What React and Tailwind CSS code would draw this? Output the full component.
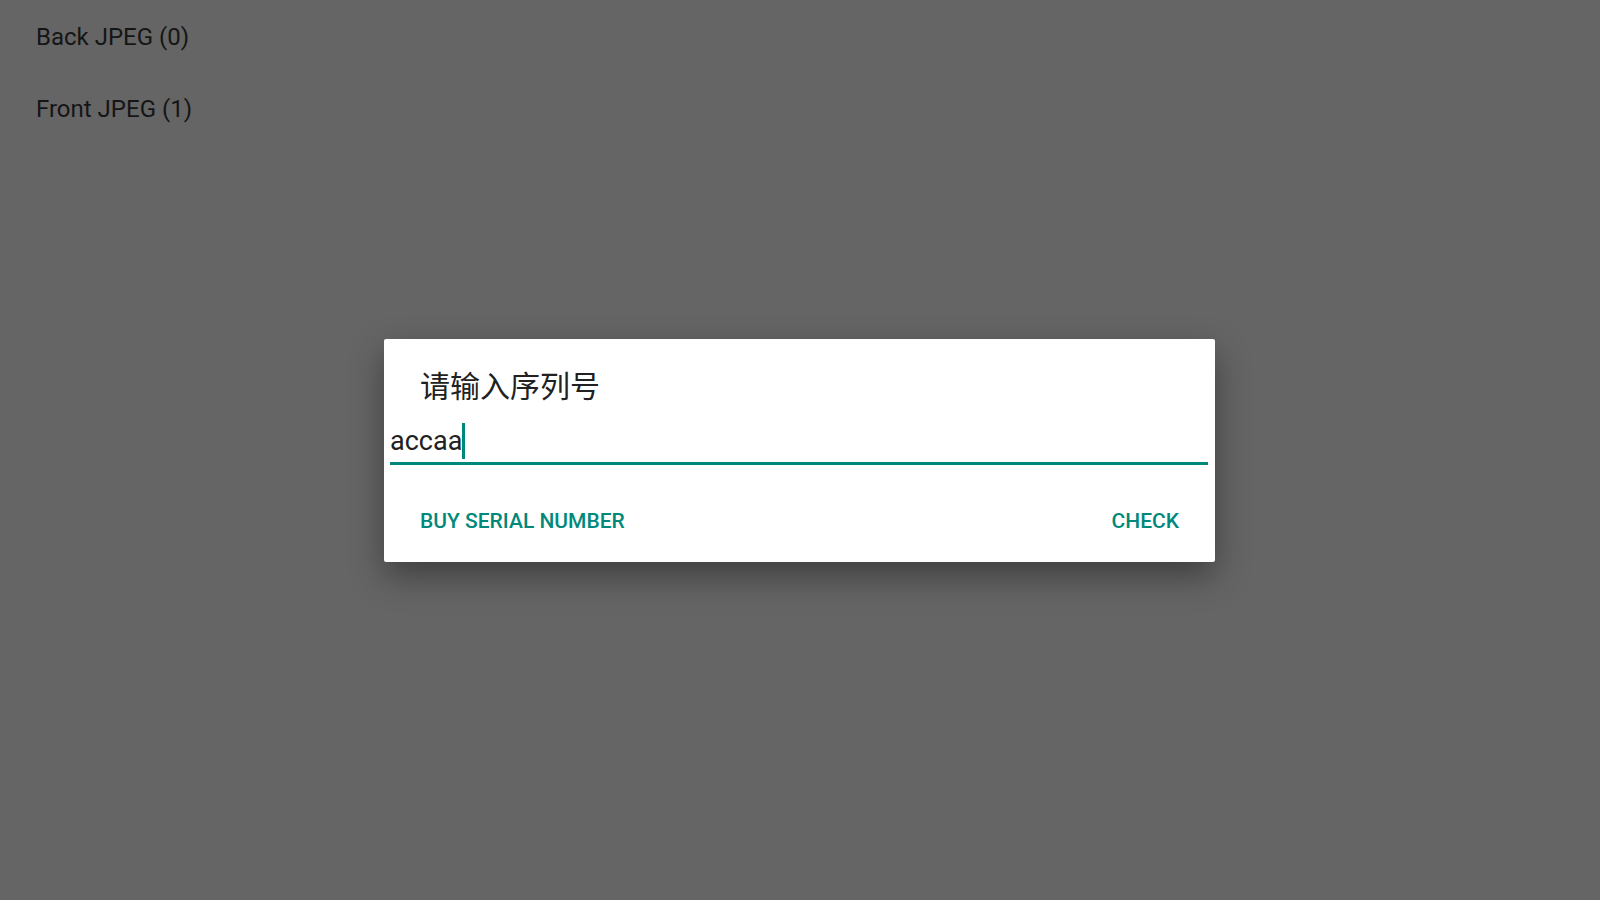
export default function App() {
  const cameras = ['Back JPEG (0)', 'Front JPEG (1)']

  return (
    <div className="relative w-full h-[900px] bg-[#656565] overflow-hidden" style={{ fontFamily: 'Roboto, "Noto Sans CJK SC", sans-serif' }}>
      {/* Camera list (dimmed behind the dialog) */}
      <div className="pt-[1px] pl-[36px]">
        {cameras.map(name => (
          <div key={name} className="h-[72px] leading-[72px] text-[24px] text-[#151515]">
            {name}
          </div>
        ))}
      </div>

      {/* Serial number dialog */}
      <div className="absolute inset-0 flex items-center justify-center">
        <div className="w-[831px] h-[223px] mr-[1px] bg-white rounded-[2px] shadow-[0_14px_34px_rgba(0,0,0,0.38)] flex flex-col">
          <div className="pt-[27px] pl-[36px] text-[30px] leading-[36px] text-[#212121]" style={{ fontFamily: '"Noto Sans CJK SC", Roboto, sans-serif' }}>
            请输入序列号
          </div>

          <div className="mt-[21px] ml-[6px] mr-[7px] pb-[3px] border-b-[3px] border-[#00897b]">
            <div className="flex items-center h-[36px] text-[27px] leading-[36px] text-[#212121]">
              <span>accaa</span>
              <span className="w-[3px] h-[36px] bg-[#00897b]" />
            </div>
          </div>

          <div className="mt-[43px] pl-[36px] pr-[36px] flex justify-between text-[21px] leading-[26px] font-medium text-[#00897b]">
            <span>BUY SERIAL NUMBER</span>
            <span>CHECK</span>
          </div>
        </div>
      </div>
    </div>
  )
}
